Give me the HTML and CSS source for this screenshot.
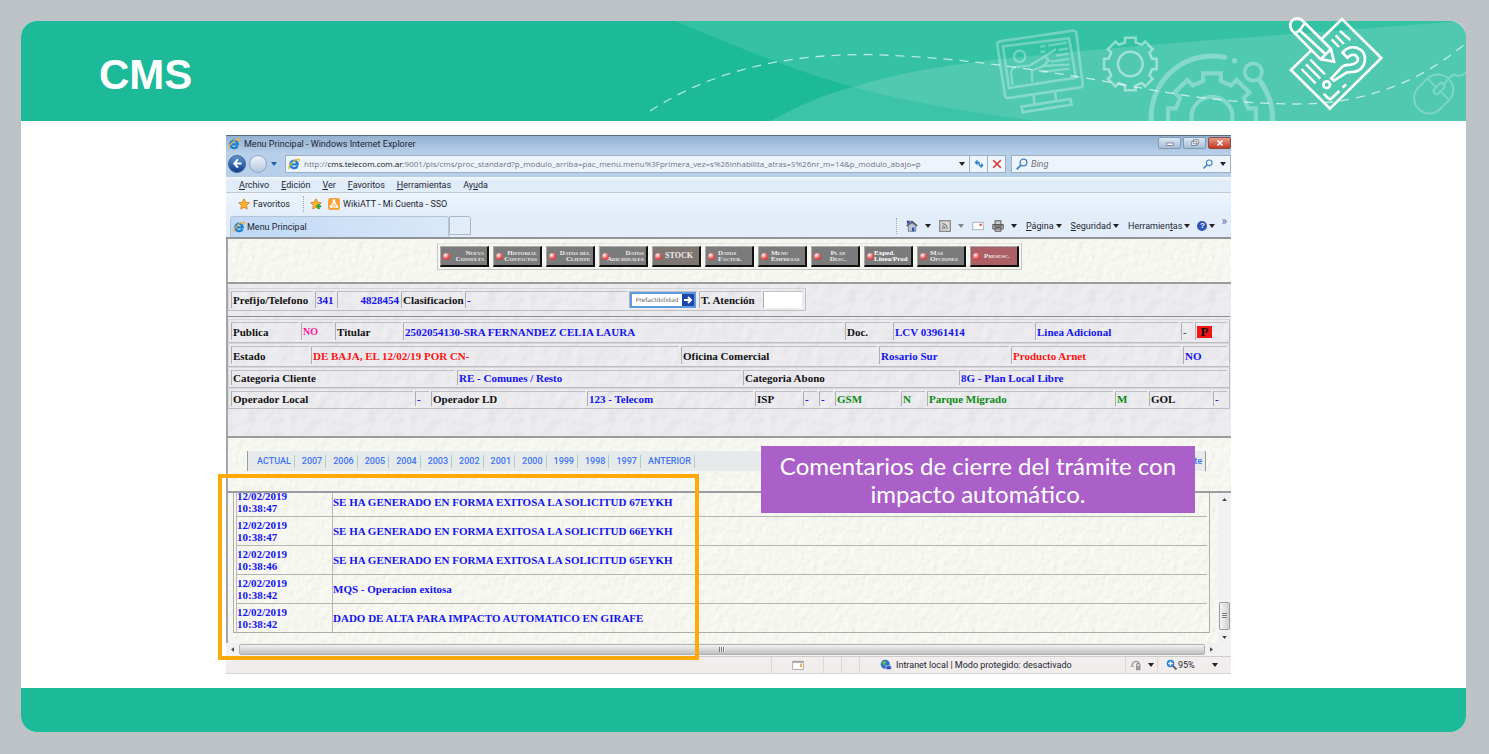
FILE: index.html
```html
<!DOCTYPE html>
<html lang="es">
<head>
<meta charset="utf-8">
<title>CMS</title>
<link rel="stylesheet" href="styles.css">
</head>
<body>
<svg class="defs" aria-hidden="true">
  <symbol id="ie" viewBox="0 0 16 16">
    <path d="M12.600 10.600A5 5 0 1 1 13 8.400H5" fill="none" stroke="#1f7fd0" stroke-width="3"/>
    <path d="M1.500 14.500C-.5 11 8 2 14 1.500c1.500 0 1.600 1.500.6 3" fill="none" stroke="#f0b429" stroke-width="1.700"/>
  </symbol>
  <symbol id="caret" viewBox="0 0 6 4"><path d="M0 0h6L3 4z"/></symbol>
  <symbol id="star" viewBox="0 0 16 16"><path d="M8 1l2.200 4.600 5 .7-3.700 3.500.9 5L8 12.400l-4.400 2.400.9-5L.8 6.300l5-.7z" fill="#fdb52d" stroke="#d07c10"/></symbol>
  <symbol id="lens" viewBox="0 0 16 16"><circle cx="10" cy="6" r="4.500" fill="#eef6fd" stroke="#3f82c4" stroke-width="1.800"/><path d="M6.500 9.500L1 15" stroke="#3f82c4" stroke-width="2.400"/></symbol>
  <symbol id="gear" viewBox="-90 -90 180 180">
    <path d="M-16-65V-79H16V-65L34.600-57.300 44.500-67.200 67.200-44.500 57.300-34.600 65-16H79V16H65L57.300 34.600 67.200 44.500 44.500 67.200 34.600 57.300 16 65V79H-16V65L-34.600 57.300-44.500 67.200-67.200 44.500-57.300 34.600-65 16H-79V-16H-65L-57.300-34.600-67.200-44.500-44.500-67.200-34.600-57.300Z" fill="none" stroke="#fff" stroke-width="7.500"/>
    <circle r="37" fill="none" stroke="#fff" stroke-width="7.500"/>
  </symbol>
</svg>

<main class="slide">
  <header class="slide-head">
    <h1>CMS</h1>
    <svg class="art" viewBox="640 12 826 109" aria-hidden="true">
      <defs><clipPath id="band"><path d="M640 21H1450Q1466 21 1466 37V121H640Z"/></clipPath></defs>
      <g clip-path="url(#band)">
        <path d="M675 21C740 48 800 73 853 87S970 113 1038 121H1466V21Z" fill="#fff" opacity=".1"/>
        <path d="M770 121C800 105 825 94 853 87 900 73 940 66 977 62 1050 53 1150 45 1213 40L1450 22H1466V121Z" fill="#fff" opacity=".14"/>
        <g transform="translate(980 10) scale(.3333)" fill="none" stroke="#fff">
          <g opacity=".3" stroke-width="8">
            <path d="M60 94L278 62Q287 61 289 70L308 222Q310 231 301 232L86 264Q77 266 75 257L52 105Q51 96 60 94Z"/>
            <path d="M69 109L267 85 288 203 87 234Z"/>
            <path d="M160 254L164 284M225 245L229 274M124 290L271 267 275 284 128 307Z"/>
            <g stroke-width="7"><circle cx="119" cy="139" r="17"/><path d="M98 225L93 190Q94 173 109 171L150 166 188 143 228 117M157 216L155 182 188 170 207 151 196 140"/>
            <path d="M181 110L196 108M205 107L260 98M181 126L196 124M236 120L264 116M228 137L266 131M212 155L268 147M183 168L268 164M185 186L268 176M197 154L207 153"/></g>
          </g>
          <use href="#gear" x="361" y="72" width="180" height="180" opacity=".45"/>
          <g opacity=".3">
            <use href="#gear" x="546" y="172" width="300" height="300"/>
            <path d="M514 334A183 183 0 0 1 735 142" stroke-width="15" stroke-linecap="round"/>
            <path d="M838 210Q880 265 878 334" stroke-width="15"/>
            <circle cx="764" cy="152" r="8" fill="#fff" stroke="none"/><circle cx="820" cy="186" r="26" stroke-width="11"/>
          </g>
          <g opacity=".25" stroke-width="6">
            <g transform="translate(1361 252) rotate(45)"><rect x="-46" y="-64" width="92" height="128" rx="46"/><rect x="-9" y="-42" width="18" height="38" rx="8"/><path d="M0-64V-42M-46-20H-9M9-20H46"/></g>
            <path d="M1403 210Q1416 190 1430 196T1462 184"/>
          </g>
        </g>
        <path d="M650 111C710 72 780 55 863 54.500 960 56 1060 73 1147 89 1200 99 1250 104 1297 104 1370 104 1425 78 1466 43" fill="none" stroke="#fff" stroke-opacity=".65" stroke-width="1.300" stroke-dasharray="9 7"/>
      </g>
      <g transform="translate(980 10) scale(.3333)" fill="none" stroke="#fff" stroke-width="8">
        <path d="M996 119L933 180 1050 296 1204 144 1086 27 1025 87"/>
        <path d="M936 61Q925 44 937 31 954 18 969 33L1053 117 1062 155 1022 148ZM942 70Q955 67 962 57T975 39M958 60L1040 136M1022 148L1053 117"/>
        <path d="M1055 88L1077 111M1067 76L1092 102M1080 63L1111 90M965 177L1007 220M978 163L1021 206M991 149L1035 193" stroke-width="7"/>
        <path d="M1088 128Q1104 107 1130 113 1158 123 1155 151 1149 184 1118 186L1101 187 1062 212 1054 205 1086 171Q1092 165 1113 164 1135 160 1134 146 1128 130 1112 136L1102 143Z" stroke-width="8"/>
        <circle cx="1040" cy="224" r="10"/><path d="M1031 251L1044 264Q1050 270 1056 264L1078 243M1088 233L1098 223"/>
      </g>
    </svg>
  </header>

  <section class="stage">
    <div class="window">
      <div class="titlebar">
        <svg class="i12"><use href="#ie"/></svg><span>Menu Principal - Windows Internet Explorer</span>
        <div class="winbtns">
          <button type="button" aria-label="Minimizar"><svg viewBox="0 0 20 12"><rect x="6" y="6" width="8" height="3" fill="#fff" stroke="#778"/></svg></button>
          <button type="button" aria-label="Restaurar"><svg viewBox="0 0 20 12"><path d="M8 2h6v5h-6zM6 4h6v5H6z" fill="#fff" stroke="#778"/></svg></button>
          <button type="button" class="close" aria-label="Cerrar"><svg viewBox="0 0 20 12"><path d="M7 3l6 6M13 3l-6 6" stroke="#fff" stroke-width="2"/></svg></button>
        </div>
      </div>

      <div class="addressbar">
        <button type="button" class="nav-back" aria-label="Atrás"><svg viewBox="0 0 16 16"><path d="M8.500 3L4 8l4.500 5M4 8h9" fill="none" stroke="#fff" stroke-width="2.500"/></svg></button>
        <button type="button" class="nav-fwd" aria-label="Adelante"></button>
        <svg class="caret blue"><use href="#caret"/></svg>
        <div class="url"><svg class="i12"><use href="#ie"/></svg><span class="addr">http://<b>cms.telecom.com.ar</b>:9001/pls/cms/proc_standard?p_modulo_arriba=pac_menu.menu%3Fprimera_vez=s%26inhabilita_atras=S%26nr_m=14&amp;p_modulo_abajo=p</span><svg class="caret"><use href="#caret"/></svg></div>
        <button type="button" class="sq" aria-label="Actualizar"><svg viewBox="0 0 16 16"><path d="M2 6l4-4v3h3v4H7V7H6v3zM14 10l-4 4v-3H8V7h1v2h2V6z" fill="#2b7fc4"/></svg></button>
        <button type="button" class="sq" aria-label="Detener"><svg viewBox="0 0 16 16"><path d="M3 3l10 10M13 3L3 13" stroke="#d8352b" stroke-width="2.200"/></svg></button>
        <div class="search"><svg class="i12"><use href="#lens"/></svg><input type="text" placeholder="Bing" aria-label="Bing"><svg class="i10"><use href="#lens"/></svg><svg class="caret"><use href="#caret"/></svg></div>
      </div>

      <nav class="menubar"><span><u>A</u>rchivo</span><span><u>E</u>dición</span><span><u>V</u>er</span><span><u>F</u>avoritos</span><span><u>H</u>erramientas</span><span>Ay<u>u</u>da</span></nav>

      <div class="favbar">
        <button type="button"><svg class="i12"><use href="#star"/></svg>Favoritos</button>
        <i class="dots"></i>
        <svg class="i12" viewBox="0 0 16 16"><use href="#star"/><path d="M8 11h7M11.500 7.500v7" stroke="#2ca53b" stroke-width="2.600"/></svg>
        <svg class="i12" viewBox="0 0 16 16"><rect width="16" height="16" rx="3" fill="#f9a23a"/><path d="M8 3l-4 9M8 3l4 9M4 12h8M8 3v9" stroke="#fff" fill="none" stroke-width="1.400"/><circle cx="8" cy="3.500" r="1.800" fill="#fff"/><circle cx="4" cy="11.500" r="1.800" fill="#fff"/><circle cx="12" cy="11.500" r="1.800" fill="#fff"/></svg>
        <span>WikiATT - Mi Cuenta - SSO</span>
      </div>

      <div class="tabbar">
        <div class="tab"><svg class="i12"><use href="#ie"/></svg>Menu Principal</div><div class="newtab"></div>
        <div class="commands">
          <i class="dots"></i>
          <svg class="i12" viewBox="0 0 16 16"><path d="M1 8l7-6 7 6" fill="none" stroke="#445" stroke-width="1.800"/><path d="M3 8v7h10V8L8 4z" fill="#b9c4d4" stroke="#667"/><path d="M8 10h3v5H8z" fill="#2855b0"/><path d="M1 1l5 0-4 5z" fill="#2438c8"/></svg><svg class="caret"><use href="#caret"/></svg>
          <svg class="i12 gap" viewBox="0 0 16 16"><rect x="1" y="1" width="14" height="14" fill="#ddd" stroke="#777" stroke-width="1.500"/><path d="M4 5q7 0 7 7M4 8q4 0 4 4" fill="none" stroke="#777" stroke-width="1.500"/><circle cx="5" cy="11" r="1.200" fill="#777"/></svg><svg class="caret dim"><use href="#caret"/></svg>
          <svg class="i12 gap" viewBox="0 0 16 16"><rect x="1" y="3" width="14" height="10" fill="#fff" stroke="#99a"/><rect x="10" y="5" width="3" height="3" fill="#d5604c"/></svg>
          <svg class="i12 gap" viewBox="0 0 16 16"><path d="M4 6V1h8v5M1 6h14v6H1zM4 10h8v5H4z" fill="#ccc" stroke="#555" stroke-width="1.300"/><path d="M2 7h12v2H2z" fill="#666"/></svg><svg class="caret"><use href="#caret"/></svg>
          <span class="cmd"><span><u>P</u>ágina</span><svg class="caret"><use href="#caret"/></svg></span>
          <span class="cmd"><span><u>S</u>eguridad</span><svg class="caret"><use href="#caret"/></svg></span>
          <span class="cmd"><span>Herramien<u>t</u>as</span><svg class="caret"><use href="#caret"/></svg></span>
          <span class="cmd help"><i>?</i><svg class="caret"><use href="#caret"/></svg></span>
          <span class="more">»</span>
        </div>
      </div>

      <div class="frame cream tools">
        <div class="toolset">
          <button type="button"><span>Nueva<br>Consulta</span></button>
          <button type="button"><span>Historial<br>Contactos</span></button>
          <button type="button"><span>Datos del<br>Cliente</span></button>
          <button type="button"><span>Datos<br>Adicionales</span></button>
          <button type="button" class="stock"><span>STOCK</span></button>
          <button type="button" class="start"><span>Datos<br>Factur.</span></button>
          <button type="button" class="start"><span>Menu<br>Empresas</span></button>
          <button type="button" class="mid"><span>Plan<br>Desc.</span></button>
          <button type="button" class="start plain"><span>Exped.<br>Linea/Prod</span></button>
          <button type="button" class="start"><span>Mas<br>Opciones</span></button>
          <button type="button" class="red"><span>Presusc.</span></button>
        </div>
      </div>

      <div class="frame lilac data">
        <table class="phone"><tr>
          <th class="w82">Prefijo/Telefono</th><td class="w20">341</td><td class="w62 right">4828454</td><th class="w62">Clasificacion</th><td class="w162">-</td>
          <td class="w68 tight"><button type="button" class="prefact"><span>Prefactibilidad</span><svg viewBox="0 0 12 12"><path d="M2 6h7M6 3l3 3-3 3" fill="none" stroke="#fff" stroke-width="2"/></svg></button></td>
          <th class="w62"><label for="tat">T. Atención</label></th><td class="w40 tight"><input id="tat" type="text"></td>
        </tr></table>
        <div class="sheet">
          <table class="tall"><tr><th class="w68">Publica</th><td class="w32 pink">NO</td><th class="w66">Titular</th><td>2502054130-SRA FERNANDEZ CELIA LAURA</td><th class="w46">Doc.</th><td class="w140">LCV 03961414</td><td class="w144">Linea Adicional</td><td class="w12 ink">-</td><td class="w32"><span class="pbadge">P</span></td></tr></table>
          <table class="tall"><tr><th class="w78">Estado</th><td class="redtxt">DE BAJA, EL 12/02/19 POR CN-</td><th class="w196">Oficina Comercial</th><td class="w130">Rosario Sur</td><td class="w170 redtxt">Producto Arnet</td><td class="w44">NO</td></tr></table>
          <table><tr><th class="w224">Categoria Cliente</th><td>RE - Comunes / Resto</td><th class="w214">Categoria Abono</th><td class="w268">8G - Plan Local Libre</td></tr></table>
          <table><tr><th class="w182">Operador Local</th><td class="w14">-</td><th class="w154">Operador LD</th><td>123 - Telecom</td><th class="w46">ISP</th><td class="w14">-</td><td class="w14">-</td><td class="w64 green">GSM</td><td class="w24 green">N</td><td class="w186 green">Parque Migrado</td><td class="w32 green">M</td><th class="w62">GOL</th><td class="w14">-</td></tr></table>
        </div>
      </div>

      <div class="frame cream years">
        <nav class="yearbar">
          <a href="#">ACTUAL</a><a href="#">2007</a><a href="#">2006</a><a href="#">2005</a><a href="#">2004</a><a href="#">2003</a><a href="#">2002</a><a href="#">2001</a><a href="#">2000</a><a href="#">1999</a><a href="#">1998</a><a href="#">1997</a><a href="#">ANTERIOR</a><a href="#" class="last">te</a>
        </nav>
      </div>

      <div class="log-row">
        <div class="frame cream log">
          <table>
            <tr><td class="when">12/02/2019 10:38:47</td><td>SE HA GENERADO EN FORMA EXITOSA LA SOLICITUD 67EYKH</td></tr>
            <tr><td class="when">12/02/2019 10:38:47</td><td>SE HA GENERADO EN FORMA EXITOSA LA SOLICITUD 66EYKH</td></tr>
            <tr><td class="when">12/02/2019 10:38:46</td><td>SE HA GENERADO EN FORMA EXITOSA LA SOLICITUD 65EYKH</td></tr>
            <tr><td class="when">12/02/2019 10:38:42</td><td>MQS - Operacion exitosa</td></tr>
            <tr><td class="when">12/02/2019 10:38:42</td><td>DADO DE ALTA PARA IMPACTO AUTOMATICO EN GIRAFE</td></tr>
          </table>
        </div>
        <div class="vscroll"><svg class="tri" viewBox="0 0 6 4"><path d="M0 4h6L3 0z"/></svg><div class="vthumb"><i></i></div><svg class="tri" viewBox="0 0 6 4"><path d="M0 0h6L3 4z"/></svg></div>
      </div>
      <div class="hscroll"><svg class="trih" viewBox="0 0 4 6"><path d="M4 0v6L0 3z"/></svg><div class="hthumb"><i></i></div><svg class="trih" viewBox="0 0 4 6"><path d="M0 0v6l4-3z"/></svg></div>

      <div class="status">
        <span class="cell w52"><svg class="i12" viewBox="0 0 16 16"><rect x="1" y="3" width="14" height="11" fill="#fff" stroke="#999"/><path d="M1 4h14" stroke="#999" stroke-width="2"/><path d="M12 6v5" stroke="#f0962c" stroke-width="2"/></svg></span>
        <span class="cell w18"></span><span class="cell w18"></span>
        <span class="cell zone"><svg class="i12" viewBox="0 0 16 16"><circle cx="7" cy="7" r="6" fill="#2b6fd4"/><path d="M3 4q4-3 6 0-3 2-2 5-4 0-4-5z" fill="#5cc04a"/><path d="M8 9h7v5H8z" fill="#2a50b8" stroke="#dde"/></svg>Intranet local | Modo protegido: desactivado</span>
        <span class="cell lock"><svg class="i12" viewBox="0 0 16 16"><path d="M3 8a5 5 0 0 1 9-3" fill="none" stroke="#888" stroke-width="1.500"/><rect x="8" y="9" width="6" height="6" fill="#999"/><path d="M9 9V7q2-3 4 0v2M1 9l4 1" fill="none" stroke="#888" stroke-width="1.500"/></svg><svg class="caret"><use href="#caret"/></svg></span>
        <span class="cell pct"><svg class="i12" viewBox="0 0 16 16"><path d="M9 9l5 5" stroke="#666" stroke-width="2.500"/><circle cx="6" cy="6" r="5" fill="#2b80d8"/><path d="M3 6h6M6 3v6" stroke="#fff" stroke-width="1.800"/></svg>95%<svg class="caret"><use href="#caret"/></svg></span>
      </div>
      <div class="highlight"></div>
      <p class="callout">Comentarios de cierre del trámite con impacto automático.</p>
    </div>
  </section>
  <footer class="slide-foot"></footer>
</main>
</body>
</html>
```
FILE: styles.css
```css
* { box-sizing: border-box; }
body { margin: 0; min-height: 100vh; display: flex; background: #bcc2c6; font-family: Roboto, "Open Sans", sans-serif; }
button, input { font: inherit; margin: 0; padding: 0; border: 0; background: none; color: inherit; }
.defs { position: absolute; width: 0; height: 0; }

.slide { flex: 1; min-width: 0; margin: 21px 23px 22px 21px; display: flex; flex-direction: column; background: #fff; border-radius: 16px; }
.slide-head { position: relative; height: 100px; padding-left: 78px; display: flex; align-items: center; background: #1dba9a; border-radius: 16px 16px 0 0; }
.slide-head h1 { margin: 8px 0 0; font: bold 42px/48px "Liberation Sans", Arial, sans-serif; color: #fff; }
.art { position: absolute; right: 0; bottom: 0; width: 826px; height: 109px; }
.slide-foot { height: 44px; background: #1dba9a; border-radius: 0 0 16px 16px; }
.stage { flex: 1; padding: 14px 235px 14px 205px; }

.window { position: relative; font-size: 9px; line-height: 12px; color: #1c2633; background: #e2edf9; }
.i10 { width: 10px; height: 10px; flex: none; }
.i12 { width: 12px; height: 12px; flex: none; }
.caret { width: 6px; height: 4px; flex: none; fill: #222; }
.dim { opacity: .5; }
.dots { width: 0; height: 16px; border-left: 1px dotted #9aa8b8; }

.titlebar { height: 19px; padding: 0 0 2px 2px; display: flex; align-items: center; gap: 4px; border-top: 1px solid #5c6b7a; background: linear-gradient(#94b2d1, #b9d0ea); }
.winbtns { margin-left: auto; display: flex; gap: 2px; align-self: flex-start; padding-top: 1px; }
.winbtns button { width: 23px; height: 12px; border: 1px solid #8299b4; border-radius: 2px; background: linear-gradient(#dbe7f4, #a5bdd8); display: flex; justify-content: center; }
.winbtns svg { width: 20px; height: 10px; }
.winbtns .close { background: linear-gradient(#e39a88, #c23a22); border-color: #8c4a40; }

.addressbar { height: 23px; padding-bottom: 4px; display: flex; align-items: center; background: #b7cfe9; }
.nav-back, .nav-fwd { width: 18px; height: 18px; border-radius: 50%; border: 1px solid #41628f; flex: none; }
.nav-back { margin-left: 2px; background: linear-gradient(#5d94d6, #0d3c8c); display: flex; align-items: center; justify-content: center; }
.nav-back svg { width: 13px; height: 13px; }
.nav-fwd { margin-left: 3px; background: linear-gradient(#eef4fa, #b4c8de); border-color: #93a7c0; }
.blue { margin: 0 8px 0 4px; fill: #1c5fa8; }
.url { flex: 1; min-width: 0; height: 18px; padding: 0 4px 0 2px; display: flex; align-items: center; gap: 4px; background: #edf4fc; border: 1px solid #9fb0c4; }
.addr { flex: 1; min-width: 0; overflow: hidden; white-space: nowrap; color: #70767e; font-family: "Open Sans", sans-serif; font-size: 8px; }
.addr b { font-weight: 400; color: #111; }
.sq { width: 18px; height: 18px; display: flex; align-items: center; justify-content: center; background: #edf4fc; border: 1px solid #9fb0c4; border-left: 0; }
.sq svg { width: 12px; height: 12px; }
.search { width: 220px; height: 18px; margin-left: 5px; padding: 0 4px; display: flex; align-items: center; gap: 3px; background: #edf4fc; border: 1px solid #9fb0c4; }
.search input { flex: 1; min-width: 0; font-style: italic; }
.search .caret { margin-left: 4px; }
.search input::placeholder { color: #6b7178; }

.menubar { height: 16px; padding-left: 13px; display: flex; align-items: center; gap: 12px; border-bottom: 1px solid #c3cad2; background: linear-gradient(#f2f8fe, #e1ecf9 4px); }
.favbar { height: 22px; padding-left: 12px; display: flex; align-items: center; gap: 3px; background: linear-gradient(#edf5fd, #e1edfa); }
.favbar button { display: flex; align-items: center; gap: 3px; margin-right: 10px; }
.favbar .dots { margin-right: 3px; }
.favbar svg + svg { margin-left: 3px; }
.tabbar { height: 24px; padding: 1px 4px 0; display: flex; border-bottom: 2px solid #919498; }
.tab { width: 219px; padding-left: 2px; display: flex; align-items: center; gap: 2px; border: 1px solid #b5c3d3; border-bottom: 0; border-radius: 3px 3px 0 0; background: linear-gradient(90deg, #bfd8f4, #d9e8f9); }
.newtab { width: 22px; margin-bottom: 2px; border: 1px solid #a9b8ca; border-radius: 0 3px 0 0; }
.commands { margin-left: auto; display: flex; align-items: center; padding-bottom: 2px; }
.commands .dots { margin-right: 9px; }
.commands > .caret { margin-left: 7px; }
.gap { margin-left: 8px; }
.cmd { display: flex; align-items: center; gap: 2px; margin-left: 9px; }
.help { margin-left: 7px; }
.help i { width: 10px; height: 10px; border-radius: 50%; background: #2c55b4; color: #fff; font: bold 8px/10px "Liberation Sans", sans-serif; text-align: center; }
.more { margin: 0 0 10px 6px; color: #5a68a8; font-size: 12px; }

.frame { border-left: 2px solid #a4a6a9; font-family: "Liberation Serif", "Times New Roman", serif; font-weight: bold; font-size: 11px; }
.cream { background: #f5f4ee url("data:image/svg+xml,%3Csvg xmlns='http://www.w3.org/2000/svg' width='120' height='120'%3E%3Cfilter id='n' x='0' y='0' width='100%25' height='100%25'%3E%3CfeTurbulence type='fractalNoise' baseFrequency='.16' numOctaves='3' stitchTiles='stitch' result='t'/%3E%3CfeDiffuseLighting in='t' surfaceScale='.6' diffuseConstant='1.010' lighting-color='%23fbfbf5'%3E%3CfeDistantLight azimuth='225' elevation='72'/%3E%3C/feDiffuseLighting%3E%3C/filter%3E%3Crect width='120' height='120' filter='url(%23n)'/%3E%3C/svg%3E"); }
.lilac { background: #e7e6ec url("data:image/svg+xml,%3Csvg xmlns='http://www.w3.org/2000/svg' width='120' height='120'%3E%3Cfilter id='n' x='0' y='0' width='100%25' height='100%25'%3E%3CfeTurbulence type='fractalNoise' baseFrequency='.08' numOctaves='2' stitchTiles='stitch' result='t'/%3E%3CfeDiffuseLighting in='t' surfaceScale='.9' lighting-color='%23f0eff3'%3E%3CfeDistantLight azimuth='225' elevation='72'/%3E%3C/feDiffuseLighting%3E%3C/filter%3E%3Crect width='120' height='120' filter='url(%23n)'/%3E%3C/svg%3E"); }
.tools, .data, .years { border-bottom: 2px solid #9c9c9e; }

.tools { height: 45px; padding-top: 4px; display: flex; justify-content: center; align-items: flex-start; }
.toolset { display: flex; gap: 4px; padding: 2px; border: 1px solid #c6c6c2; border-top-color: #e4e4e0; }
.toolset button { width: 49px; height: 21px; padding: 0 3px 0 2px; display: flex; align-items: center; background: #7b7b7b; border: 1px solid #aaa; border-right: 2px solid #111; border-bottom: 2px solid #111; color: #ececec; font-size: 7px; line-height: 6px; font-variant: small-caps; text-align: right; }
.toolset button::before { content: ""; width: 7px; height: 7px; margin-right: -2px; flex: none; border-radius: 50%; background: radial-gradient(circle at 35% 30%, #fff, #f05a5a 50%, #b42020); }
.toolset button span { flex: 1; white-space: nowrap; }
.toolset .start span { text-align: left; padding-left: 5px; }
.toolset .mid span, .toolset .stock span, .toolset .red span { text-align: center; padding-left: 2px; }
.toolset .stock { background: #7d7672; font-size: 8px; }
.toolset .red { background: #ac5f64; }
.toolset .plain { font-variant: normal; color: #fff; }
.toolset .plain span { padding-left: 2px; }

table { border-spacing: 2px; border: 1px solid #bdbdc1; border-top-color: #d6d6da; border-left-color: #d6d6da; }
th, td { padding: 0 0 0 1px; text-align: left; font-weight: bold; white-space: nowrap; border-left: 1px solid #adadb2; border-top: 1px solid #bfbfc4; line-height: 12px; }
th { color: #111; }
td { color: #1313f0; }
.right { text-align: right; }
.tight { padding: 0; }
.pink { color: #ff1493; font-size: 10px; }
.redtxt { color: #fb1414; }
.green { color: #0b8a12; }
.ink { color: #444; }

.data { height: 154px; padding: 4px 1px 0 0; }
.phone { table-layout: fixed; width: 578px; height: 22px; }
.prefact { width: 66px; height: 16px; display: flex; border: 2px solid #5d9ae0; background: #fff; }
.prefact span { flex: 1; font: 6px/12px "DejaVu Sans", sans-serif; color: #666; text-align: center; }
.prefact svg { width: 12px; height: 12px; background: #1c47a8; }
.phone input { display: block; width: 38px; height: 16px; background: #fff; }
.sheet { margin-top: 5px; padding: 2px 0 0; border-top: 1px solid #8f8f93; }
.sheet table { table-layout: fixed; width: 100%; height: 21px; }
.sheet .tall { height: 24px; }
.pbadge { display: block; width: 15px; height: 12px; background: #f51414; color: #111; text-align: center; font-size: 13px; line-height: 12px; }

.w12 { width: 12px; } .w14 { width: 14px; } .w18 { width: 18px; } .w20 { width: 20px; } .w24 { width: 24px; } .w32 { width: 32px; }
.w40 { width: 40px; } .w44 { width: 44px; } .w46 { width: 46px; } .w52 { width: 52px; } .w62 { width: 62px; } .w64 { width: 64px; }
.w66 { width: 66px; } .w68 { width: 68px; } .w78 { width: 78px; } .w82 { width: 82px; } .w130 { width: 130px; } .w140 { width: 140px; }
.w144 { width: 144px; } .w154 { width: 154px; } .w162 { width: 162px; } .w170 { width: 170px; } .w182 { width: 182px; } .w186 { width: 186px; }
.w196 { width: 196px; } .w214 { width: 214px; } .w224 { width: 224px; } .w268 { width: 268px; }

.years { height: 55px; padding: 13px 25px 0 19px; }
.yearbar { height: 20px; display: flex; align-items: center; background: #e6eaeb; border-left: 1px solid #999; border-right: 1px solid #999; padding-left: 2px; }
.yearbar a { padding: 0 3px 0 7px; border-right: 1px solid #a9cfcf; font: 500 9px/13px Roboto, sans-serif; color: #3f74f5; text-decoration: none; }
.yearbar .last { margin-left: auto; border: 0; }

.log-row { display: flex; height: 150px; }
.log { flex: 1; min-width: 0; overflow: hidden; display: flex; flex-direction: column; justify-content: flex-end; padding: 0 8px 10px 5px; }
.log table { width: 100%; border-spacing: 0; table-layout: fixed; border-color: #aeaeac; padding: 0 2px; }
.log td { height: 29px; padding: 0 0 1px; white-space: normal; border-top: 1px solid #b4b4b0; border-left-color: #b8b8b4; }
.log .when { width: 96px; padding-right: 30px; }
.vscroll { width: 13px; display: flex; flex-direction: column; align-items: center; padding: 5px 0 4px; background: #f1f1f2; }
.tri { width: 5px; height: 3px; fill: #444; }
.vthumb { margin: auto 0 6px; width: 11px; height: 28px; border: 1px solid #9b9b9b; border-radius: 2px; background: linear-gradient(90deg, #f4f4f4, #cfcfd1); display: flex; align-items: center; justify-content: center; }
.vthumb i { width: 5px; height: 6px; background: repeating-linear-gradient(#777 0 1px, #eee 1px 2px); }
.hscroll { height: 14px; padding: 0 18px 0 5px; display: flex; align-items: center; gap: 5px; background: #f1f1f2; border-bottom: 1px solid #ccc; }
.trih { width: 3px; height: 5px; fill: #444; }
.hthumb { flex: 1; height: 11px; border: 1px solid #b3b3b3; border-radius: 2px; background: linear-gradient(#f2f2f2, #bfbfc2); display: flex; align-items: center; justify-content: center; }
.hthumb i { width: 6px; height: 5px; background: repeating-linear-gradient(90deg, #777 0 1px, #eee 1px 2px); }

.status { height: 17px; display: flex; justify-content: flex-end; background: #f0edec; border-bottom: 1px solid #d4d4d4; }
.cell { border-left: 1px solid #dcd8d8; display: flex; align-items: center; justify-content: center; gap: 4px; }
.zone { width: 266px; justify-content: flex-start; padding-left: 20px; }
.lock { width: 32px; gap: 6px; }
.pct { width: 74px; justify-content: flex-start; padding-left: 8px; gap: 0; }
.pct .caret { margin-left: 17px; }

.highlight { position: absolute; left: -8px; top: 339px; width: 481px; height: 186px; border: 4px solid #ffa90a; }
.callout { position: absolute; right: 36px; top: 311px; width: 434px; margin: 0; padding: 6px 10px 5px; background: #ab5fc9; color: #fff; font: 24px/28px Lato, sans-serif; text-align: center; }
```
